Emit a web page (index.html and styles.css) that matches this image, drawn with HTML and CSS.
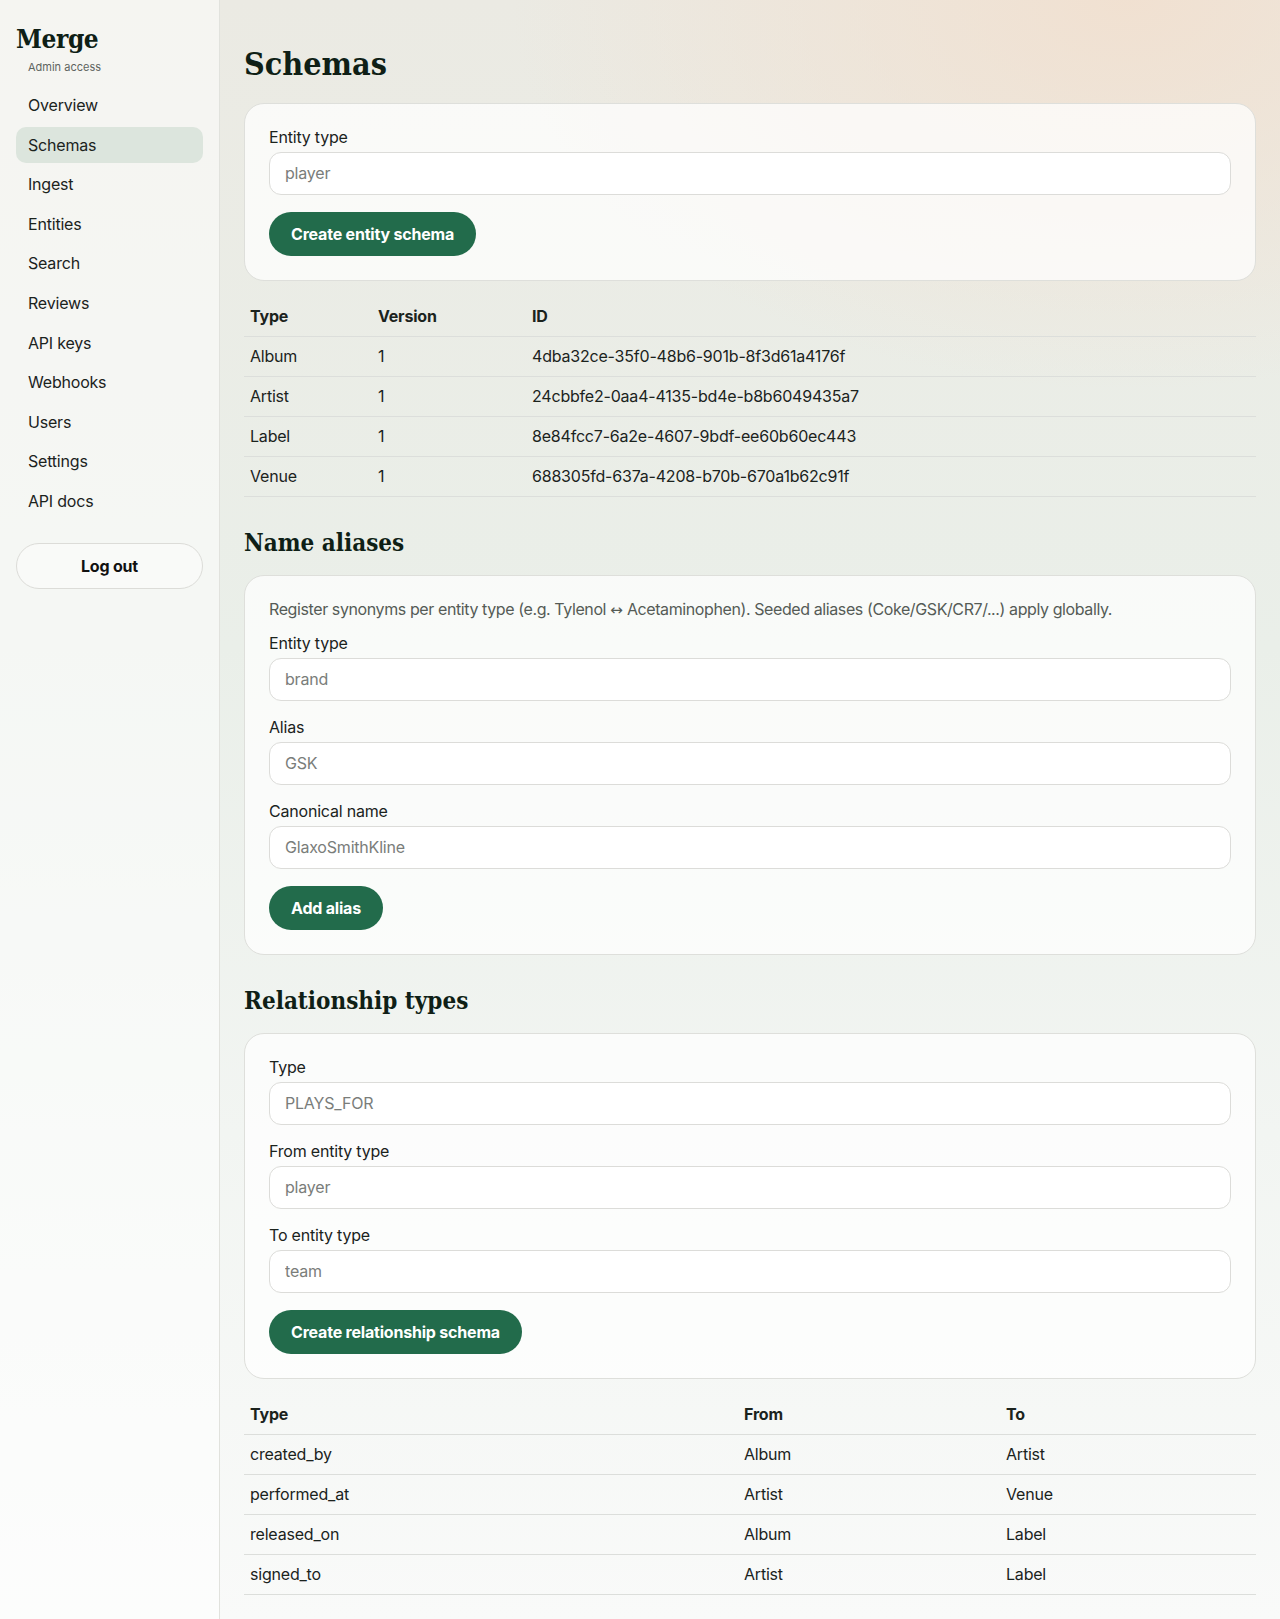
FILE: index.html
```html
<!DOCTYPE html>
<html lang="en">
<head>
    <meta charset="UTF-8">
    <meta name="viewport" content="width=device-width, initial-scale=1.0">
    <title>Schemas - Merge</title>
    <link rel="stylesheet" href="styles.css">
</head>
<body>
    <aside class="sidebar">
        <div class="brand">Merge</div>
        <div class="brand-sub">Admin access</div>
        <nav class="nav">
            <a href="#">Overview</a>
            <a href="#" class="active">Schemas</a>
            <a href="#">Ingest</a>
            <a href="#">Entities</a>
            <a href="#">Search</a>
            <a href="#">Reviews</a>
            <a href="#">API keys</a>
            <a href="#">Webhooks</a>
            <a href="#">Users</a>
            <a href="#">Settings</a>
            <a href="#">API docs</a>
        </nav>
        <button class="logout">Log out</button>
    </aside>

    <main class="content">
        <h1>Schemas</h1>

        <div class="card">
            <div class="field">
                <label>Entity type</label>
                <input type="text" placeholder="player">
            </div>
            <button class="primary">Create entity schema</button>
        </div>

        <table class="schema-table">
            <tr>
                <th class="w-type">Type</th>
                <th class="w-version">Version</th>
                <th>ID</th>
            </tr>
            <tr><td>Album</td><td>1</td><td>4dba32ce-35f0-48b6-901b-8f3d61a4176f</td></tr>
            <tr><td>Artist</td><td>1</td><td>24cbbfe2-0aa4-4135-bd4e-b8b6049435a7</td></tr>
            <tr><td>Label</td><td>1</td><td>8e84fcc7-6a2e-4607-9bdf-ee60b60ec443</td></tr>
            <tr><td>Venue</td><td>1</td><td>688305fd-637a-4208-b70b-670a1b62c91f</td></tr>
        </table>

        <h2>Name aliases</h2>

        <div class="card">
            <p class="help">Register synonyms per entity type (e.g. Tylenol <span class="arrow">↔</span> Acetaminophen). Seeded aliases (Coke/GSK/CR7/...) apply globally.</p>
            <div class="field">
                <label>Entity type</label>
                <input type="text" placeholder="brand">
            </div>
            <div class="field">
                <label>Alias</label>
                <input type="text" placeholder="GSK">
            </div>
            <div class="field">
                <label>Canonical name</label>
                <input type="text" placeholder="GlaxoSmithKline">
            </div>
            <button class="primary">Add alias</button>
        </div>

        <h2>Relationship types</h2>

        <div class="card">
            <div class="field">
                <label>Type</label>
                <input type="text" placeholder="PLAYS_FOR">
            </div>
            <div class="field">
                <label>From entity type</label>
                <input type="text" placeholder="player">
            </div>
            <div class="field">
                <label>To entity type</label>
                <input type="text" placeholder="team">
            </div>
            <button class="primary">Create relationship schema</button>
        </div>

        <table class="schema-table">
            <tr>
                <th class="w-rel">Type</th>
                <th class="w-from">From</th>
                <th>To</th>
            </tr>
            <tr><td>created_by</td><td>Album</td><td>Artist</td></tr>
            <tr><td>performed_at</td><td>Artist</td><td>Venue</td></tr>
            <tr><td>released_on</td><td>Album</td><td>Label</td></tr>
            <tr><td>signed_to</td><td>Artist</td><td>Label</td></tr>
        </table>
    </main>
</body>
</html>
```

FILE: styles.css
```css
* {
    box-sizing: border-box;
    margin: 0;
    padding: 0;
}

body {
    min-height: 100vh;
    display: flex;
    font-family: 'Inter', 'Noto Sans', sans-serif;
    font-size: 16px;
    letter-spacing: -0.2px;
    color: #1b231d;
    background:
        radial-gradient(ellipse 820px 520px at 88% 0%, rgba(241, 224, 208, 0.95), rgba(241, 224, 208, 0) 75%),
        linear-gradient(180deg, #ebeae3 0%, #eaefe9 40%, #f2f5f2 70%, #f9faf9 100%);
}

/* sidebar */
.sidebar {
    width: 220px;
    flex-shrink: 0;
    padding: 23px 16px 20px;
    background: rgba(255, 255, 255, 0.5);
    border-right: 1px solid #e1e2dd;
}

.brand {
    font-family: 'DejaVu Serif', 'Liberation Serif', serif;
    font-stretch: condensed;
    font-weight: bold;
    font-size: 26px;
    line-height: 32px;
    color: #0f1f16;
    letter-spacing: -0.4px;
}

.brand-sub {
    padding-left: 12px;
    margin-top: 5px;
    font-size: 11px;
    line-height: 14px;
    letter-spacing: 0;
    color: #5e645f;
}

.nav {
    margin-top: 13px;
    display: flex;
    flex-direction: column;
    gap: 3.6px;
}

.nav a {
    display: block;
    padding: 7px 12px;
    line-height: 22px;
    color: #1b231d;
    text-decoration: none;
    border-radius: 10px;
}

.nav a.active {
    background: #dce5dd;
}

.logout {
    display: block;
    width: 100%;
    margin-top: 24.5px;
    padding: 12px;
    line-height: 20px;
    font-family: inherit;
    font-size: 16px;
    font-weight: bold;
    letter-spacing: -0.2px;
    color: #111;
    background: rgba(255, 255, 255, 0.4);
    border: 1px solid #dcdcd8;
    border-radius: 999px;
}

/* main */
.content {
    flex: 1;
    padding: 45px 24px 24px;
}

h1, h2 {
    font-family: 'DejaVu Serif', 'Liberation Serif', serif;
    font-stretch: condensed;
    font-weight: bold;
    letter-spacing: 0;
    color: #0f1f16;
}

h1 {
    font-size: 32px;
    line-height: 38px;
    margin-bottom: 20px;
}

h2 {
    font-size: 24px;
    line-height: 29px;
    margin: 31px 0 18px;
}

.card {
    padding: 24px;
    background: rgba(255, 255, 255, 0.72);
    border: 1px solid #dedfdb;
    border-radius: 20px;
}

.help {
    font-size: 16px;
    line-height: 18px;
    letter-spacing: -0.4px;
    color: #555b56;
    margin-bottom: 14.5px;
}

.help .arrow {
    font-family: 'DejaVu Sans', sans-serif;
    font-size: 15px;
    letter-spacing: 0;
}

.field {
    margin-bottom: 17px;
}

.field label {
    display: block;
    line-height: 18px;
    margin-bottom: 6px;
    color: #1b231d;
}

.field input {
    display: block;
    width: 100%;
    padding: 10px 15px;
    line-height: 21px;
    font-family: inherit;
    font-size: 16px;
    letter-spacing: -0.2px;
    color: #1b231d;
    background: #fff;
    border: 1px solid #dcdcd9;
    border-radius: 12px;
}

.field input::placeholder {
    color: #7a7d7a;
}

button.primary {
    padding: 12px 22px;
    line-height: 20px;
    font-family: inherit;
    font-size: 16px;
    font-weight: bold;
    letter-spacing: -0.2px;
    color: #fff;
    background: #226b4b;
    border: none;
    border-radius: 999px;
}

/* tables */
.schema-table {
    width: 100%;
    margin-top: 16px;
    border-collapse: collapse;
}

.schema-table th, .schema-table td {
    padding: 10px 6px;
    line-height: 19px;
    text-align: left;
    border-bottom: 1px solid #dcdedb;
}

.schema-table th {
    font-weight: bold;
}

.w-type { width: 128px; }
.w-version { width: 154px; }
.w-rel { width: 494px; }
.w-from { width: 262px; }
```
